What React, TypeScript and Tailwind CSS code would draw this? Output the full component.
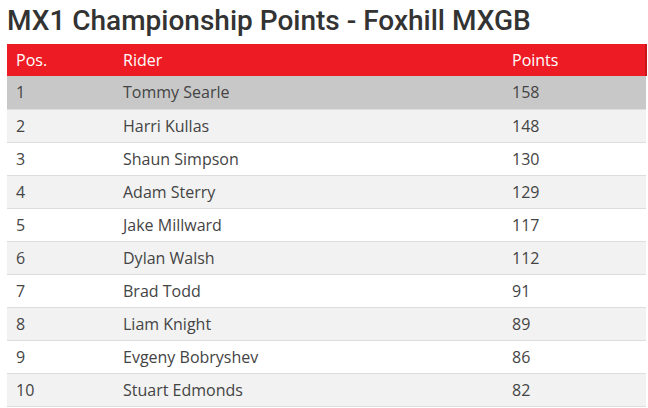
import React from 'react';

const riders = [
  { pos: 1, name: 'Tommy Searle', points: 158 },
  { pos: 2, name: 'Harri Kullas', points: 148 },
  { pos: 3, name: 'Shaun Simpson', points: 130 },
  { pos: 4, name: 'Adam Sterry', points: 129 },
  { pos: 5, name: 'Jake Millward', points: 117 },
  { pos: 6, name: 'Dylan Walsh', points: 112 },
  { pos: 7, name: 'Brad Todd', points: 91 },
  { pos: 8, name: 'Liam Knight', points: 89 },
  { pos: 9, name: 'Evgeny Bobryshev', points: 86 },
  { pos: 10, name: 'Stuart Edmonds', points: 82 },
];

const App = () => {
  return (
    <div className="w-[648px] h-[408px] bg-white pl-[7px] pt-[5px] overflow-hidden">
      {/* Title */}
      <h1 className="font-['Roboto',sans-serif] font-medium text-[28px] leading-[32px] text-[#333333] whitespace-nowrap">
        MX1 Championship Points - Foxhill MXGB
      </h1>

      {/* Standings table */}
      <table className="mt-[7px] w-[640px] border-collapse font-['Open_Sans',sans-serif] text-[16px]">
        <thead>
          <tr className="bg-[#ed1c24] text-white h-[32px]">
            <th className="w-[107px] pl-[9px] text-left font-normal">Pos.</th>
            <th className="w-[389px] pl-[9px] text-left font-normal">Rider</th>
            <th className="pl-[9px] text-left font-normal border-r-2 border-[#c8151c]">Points</th>
          </tr>
        </thead>
        <tbody className="text-[#444444]">
          {riders.map((r, i) => (
            <tr
              key={r.pos}
              className={`h-[33px] border-b border-[#dddddd] ${
                i === 0 ? 'bg-[#c8c8c8]' : i % 2 === 1 ? 'bg-[#f2f2f2]' : 'bg-white'
              }`}
            >
              <td className="pl-[9px]">{r.pos}</td>
              <td className="pl-[9px]">{r.name}</td>
              <td className="pl-[9px]">{r.points}</td>
            </tr>
          ))}
        </tbody>
      </table>
    </div>
  );
};

export default App;
